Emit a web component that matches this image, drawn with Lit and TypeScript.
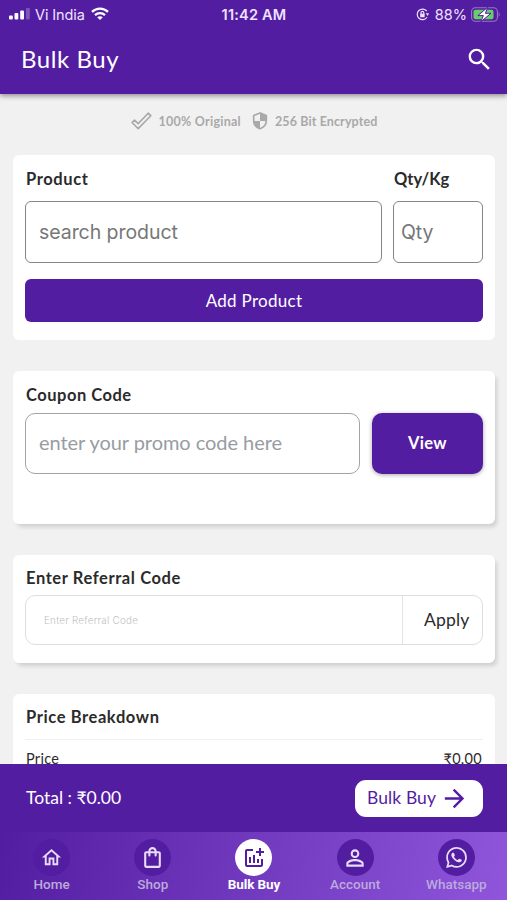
import { LitElement, html, css, svg } from "lit";
import { customElement } from "lit/decorators.js";

const icons = {
  search: "M15.5 14h-.79l-.28-.27A6.471 6.471 0 0 0 16 9.5 6.5 6.5 0 1 0 9.5 16c1.61 0 3.09-.59 4.23-1.57l.27.28v.79l5 4.99L20.49 19l-4.99-5zm-6 0C7.01 14 5 11.99 5 9.5S7.01 5 9.5 5 14 7.01 14 9.5 11.99 14 9.5 14z",
  home: "M12 5.69l5 4.5V18h-2v-6H9v6H7v-7.81l5-4.5M12 3L2 12h3v8h6v-6h2v6h6v-8h3L12 3z",
  shop: "M18 6h-2c0-2.21-1.79-4-4-4S8 3.79 8 6H6c-1.1 0-2 .9-2 2v12c0 1.1.9 2 2 2h12c1.1 0 2-.9 2-2V8c0-1.1-.9-2-2-2zm-6-2c1.1 0 2 .9 2 2h-4c0-1.1.9-2 2-2zm6 16H6V8h2v2c0 .55.45 1 1 1s1-.45 1-1V8h4v2c0 .55.45 1 1 1s1-.45 1-1V8h2v12z",
  chart: "M22 5v2h-3v3h-2V7h-3V5h3V2h2v3h3zm-3 14H5V5h6V3H5c-1.1 0-2 .9-2 2v14c0 1.1.9 2 2 2h14c1.1 0 2-.9 2-2v-6h-2v6zm-4-6v4h2v-4h-2zm-4 4h2V9h-2v8zm-2 0v-6H7v6h2z",
  person: "M12 5.9a2.1 2.1 0 1 1 0 4.2 2.1 2.1 0 0 1 0-4.2m0 9c2.97 0 6.1 1.46 6.1 2.1v1.1H5.9V17c0-.64 3.13-2.1 6.1-2.1M12 4C9.79 4 8 5.79 8 8s1.79 4 4 4 4-1.79 4-4-1.79-4-4-4zm0 9c-2.67 0-8 1.34-8 4v3h16v-3c0-2.66-5.33-4-8-4z",
  whatsapp: "M19.05 4.91A9.816 9.816 0 0 0 12.04 2c-5.46 0-9.91 4.45-9.91 9.91 0 1.75.46 3.45 1.32 4.95L2.05 22l5.25-1.38c1.45.79 3.08 1.21 4.74 1.21 5.46 0 9.91-4.45 9.91-9.91 0-2.65-1.03-5.14-2.9-7.01zm-7.01 15.24c-1.48 0-2.93-.4-4.2-1.15l-.3-.18-3.12.82.83-3.04-.2-.31a8.264 8.264 0 0 1-1.26-4.38c0-4.54 3.7-8.24 8.24-8.24 2.2 0 4.27.86 5.82 2.42a8.183 8.183 0 0 1 2.41 5.83c.02 4.54-3.68 8.23-8.22 8.23zm4.52-6.16c-.25-.12-1.47-.72-1.69-.81-.23-.08-.39-.12-.56.12-.17.25-.64.81-.78.97-.14.17-.29.19-.54.06-.25-.12-1.05-.39-1.99-1.23-.74-.66-1.23-1.47-1.38-1.72-.14-.25-.02-.38.11-.51.11-.11.25-.29.37-.43s.17-.25.25-.41c.08-.17.04-.31-.02-.43s-.56-1.34-.76-1.84c-.2-.48-.41-.42-.56-.43h-.48c-.17 0-.43.06-.66.31-.22.25-.86.85-.86 2.07s.89 2.4 1.01 2.56c.12.17 1.75 2.67 4.23 3.74.59.26 1.05.41 1.41.52.59.19 1.13.16 1.56.1.48-.07 1.47-.6 1.67-1.18.21-.58.21-1.07.14-1.18s-.22-.16-.47-.28z",
  arrow: "M12 4l-1.41 1.41L16.17 11H4v2h12.17l-5.58 5.59L12 20l8-8-8-8z",
};

const icon = (name: keyof typeof icons, size: number) =>
  html`<svg width=${size} height=${size} viewBox="0 0 24 24" fill="currentColor">${svg`<path d=${icons[name]}></path>`}</svg>`;

const tabs: { label: string; icon: keyof typeof icons; size: number; active?: boolean }[] = [
  { label: "Home", icon: "home", size: 23 },
  { label: "Shop", icon: "shop", size: 25 },
  { label: "Bulk Buy", icon: "chart", size: 24, active: true },
  { label: "Account", icon: "person", size: 26 },
  { label: "Whatsapp", icon: "whatsapp", size: 25 },
];

@customElement("app-root")
export class AppRoot extends LitElement {
  static styles = css`
    :host {
      display: flex;
      flex-direction: column;
      height: 900px;
      overflow: hidden;
      background: #f1f1f1;
      color: #2b2b2b;
      font-family: Lato, "Noto Sans", sans-serif;
      line-height: 1;
      white-space: nowrap;
    }
    * { box-sizing: border-box; }
    svg { display: block; flex: none; }
    .top {
      flex: none;
      height: 94px;
      background: #531da1;
      color: #fff;
      box-shadow: 0 2px 5px rgba(0, 0, 0, 0.4);
      z-index: 1;
    }
    .status {
      display: grid;
      grid-template-columns: 1fr auto 1fr;
      align-items: center;
      height: 28px;
      padding: 0 6px 0 9px;
      font: 14.5px Inter, sans-serif;
      color: #efe2ff;
    }
    .left, .right { display: flex; align-items: center; }
    .right { justify-content: flex-end; }
    .carrier { margin: 0 6px 0 5px; letter-spacing: -0.1px; }
    .clock { margin-right: 2px; font-weight: 600; letter-spacing: 0.2px; }
    .percent { margin: 0 4px 0 6px; }
    .appbar {
      display: flex;
      justify-content: space-between;
      align-items: center;
      height: 62px;
      padding: 0 13px 0 21px;
    }
    .title { font-size: 24px; letter-spacing: 0.55px; }
    .trust {
      display: flex;
      justify-content: center;
      align-items: center;
      height: 61px;
      padding: 0 0 7px 1px;
      color: #a9a9a9;
      font-size: 12.5px;
      font-weight: 700;
    }
    .original, .encrypted { line-height: 16px; padding-top: 1px; }
    .original { margin: 0 11px 0 7px; letter-spacing: 0.25px; }
    .encrypted { margin-left: 7px; letter-spacing: 0.12px; }
    .content { flex: 1; min-height: 0; overflow: hidden; }
    .card {
      margin: 0 12px 0 13px;
      padding: 0 12px;
      border-radius: 6px;
      background: #fff;
    }
    .raised { box-shadow: 3px 4px 4px -1px rgba(0, 0, 0, 0.14); }
    .products { height: 185px; margin-bottom: 31px; padding-top: 15px; }
    .coupon { height: 153px; margin-bottom: 31px; padding-top: 15px; }
    .referral { height: 108px; margin-bottom: 31px; padding-top: 14px; }
    .prices { height: 120px; padding-top: 14px; }
    .label { height: 18px; padding-left: 1px; line-height: 18px; font-size: 16.5px; font-weight: 700; letter-spacing: 0.6px; }
    .label.coupon-label { letter-spacing: 0.5px; }
    .label.short { letter-spacing: 0; }
    .row { display: flex; }
    .fields { display: grid; grid-template-columns: 357px 90px; gap: 11px; }
    .names { height: 31px; }
    .input {
      display: flex;
      align-items: center;
      height: 62px;
      padding-left: 13px;
      border: 1.5px solid #858585;
      border-radius: 6px;
      color: #777;
      font: 19.5px Inter, sans-serif;
      letter-spacing: -0.05px;
    }
    .qty { padding-left: 7px; }
    .add {
      display: flex;
      align-items: center;
      justify-content: center;
      height: 43px;
      margin-top: 16px;
      border-radius: 6px;
      background: #531da1;
      color: #fff;
      font-size: 17px;
      letter-spacing: 0.3px;
    }
    .promo {
      width: 335px;
      height: 61px;
      padding-bottom: 3px;
      border-color: #a3a3a3;
      border-radius: 10px;
      color: #979ca3;
      font: 20px Lato, sans-serif;
      letter-spacing: -0.05px;
    }
    .promo-row { margin-top: 9px; gap: 12px; }
    .view {
      display: flex;
      align-items: center;
      justify-content: center;
      width: 111px;
      height: 61px;
      border-radius: 10px;
      background: #531da1;
      color: #fff;
      font-size: 16.5px;
      font-weight: 700;
      letter-spacing: 0.3px;
      box-shadow: 0 1px 4px rgba(0, 0, 0, 0.35);
    }
    .refbox { height: 50px; margin-top: 8px; border: 1px solid #dedede; border-radius: 10px; align-items: stretch; }
    .hint { display: flex; align-items: center; flex: 1; padding-left: 18px; color: #c0c0c0; font: 300 9.8px Inter, sans-serif; letter-spacing: 0.27px; }
    .apply { display: flex; align-items: center; width: 80px; padding-left: 21px; border-left: 1px solid #e4e4e4; font-size: 17.5px; letter-spacing: 0.2px; }
    .price-row { justify-content: space-between; margin-top: 13px; padding: 12px 1px 0; border-top: 1px solid #f0f0f0; font-size: 14.5px; letter-spacing: 0.3px; }
    .checkout {
      flex: none;
      display: flex;
      align-items: center;
      justify-content: space-between;
      height: 68px;
      padding: 0 24px 0 26px;
      background: #531da1;
      color: #fff;
    }
    .total { font-size: 17.5px; }
    .buy {
      display: flex;
      align-items: center;
      width: 128px;
      height: 37px;
      padding-left: 12px;
      gap: 4px;
      border-radius: 11px;
      background: #fff;
      color: #531da1;
      font-size: 17.5px;
      letter-spacing: 0.1px;
    }
    .tabs {
      flex: none;
      display: grid;
      grid-template-columns: repeat(5, 101.2px);
      height: 68px;
      padding: 7px 0 0 1px;
      background: linear-gradient(100deg, #531da1 0%, #8f56dc 100%);
      color: #bda9dc;
      font: 500 13.5px Roboto, sans-serif;
    }
    .tab { display: flex; flex-direction: column; align-items: center; }
    .disc {
      display: flex;
      align-items: center;
      justify-content: center;
      width: 37px;
      height: 37px;
      border-radius: 50%;
      background: #531da1;
      color: #e9dcf8;
    }
    .active { color: #fff; font-weight: 700; letter-spacing: -0.1px; }
    .active .disc { background: #fff; color: #531da1; }
  `;

  render() {
    return html`
      <header class="top">
        <div class="status">
          <div class="left">
            <svg width="21" height="12" viewBox="0 0 21 12" fill="#fff">
              <rect x="0" y="7.5" width="3.8" height="4" rx="1"></rect>
              <rect x="5.5" y="5" width="3.8" height="6.5" rx="1"></rect>
              <rect x="11.2" y="2.5" width="3.8" height="9" rx="1"></rect>
              <rect x="17" y="0" width="3.8" height="11.5" rx="1" opacity=".25"></rect>
            </svg>
            <span class="carrier">Vi India</span>
            <svg width="18" height="14" viewBox="0 0 18 14" fill="none" stroke="#fff" stroke-width="2.3">
              <path d="M1 4.8C5.5.5 12.5.5 17 4.8M4 8.1c2.8-2.7 7.2-2.7 10 0"></path>
              <path d="M6.2 10.2c1.6-1.4 4-1.4 5.6 0L9 13.1z" fill="#fff" stroke="none"></path>
            </svg>
          </div>
          <span class="clock">11:42 AM</span>
          <div class="right">
            <svg width="13" height="13" viewBox="0 0 13 13" fill="none" stroke="#efe2ff" stroke-width="1.2">
              <path d="M10.8 3.2A5.3 5.3 0 1 0 11 9.2"></path>
              <path d="M9.7 5.3h3.3L11.7 7.9z" fill="#efe2ff" stroke="none"></path>
              <path d="M5 6V4.8a1.4 1.4 0 0 1 2.8 0V6"></path>
              <rect x="4.2" y="5.8" width="4.4" height="3.4" rx=".5" fill="#efe2ff" stroke="none"></rect>
            </svg>
            <span class="percent">88%</span>
            <svg width="30" height="15" viewBox="0 0 30 15">
              <rect x=".6" y=".8" width="25.8" height="13.4" rx="3.8" fill="none" stroke="#9678c9" stroke-width="1.1"></rect>
              <rect x="2.5" y="2.7" width="20" height="9.6" rx="2" fill="#65cf69"></rect>
              <path d="M27.7 5q2 2.5 0 5z" fill="#9678c9"></path>
              <path d="M16.8.2L6.8 8.6h5.6L9.8 14.800 20 6.300h-5.600z" fill="#fff" stroke="#531da1" stroke-width="1"></path>
            </svg>
          </div>
        </div>
        <div class="appbar"><span class="title">Bulk Buy</span>${icon("search", 29)}</div>
      </header>

      <main class="content">
        <div class="trust">
          <svg width="21" height="18" viewBox="0 0 21 18" fill="none" stroke="currentColor" stroke-width="1.6" stroke-linejoin="round">
            <path d="M1 10.5l2.5-2.4 3.7 3.5L17.2 1.2l2.6 2.5L7.2 16.6z"></path>
          </svg>
          <span class="original">100% Original</span>
          <svg width="16" height="18" viewBox="0 0 15 18">
            <path d="M7.5 1L1.2 3.5v5c0 3.7 2.7 7 6.3 8.2 3.6-1.2 6.3-4.5 6.3-8.2v-5z" fill="none" stroke="currentColor" stroke-width="1.7"></path>
            <path d="M7.5 1l6.3 2.5V9H7.5zM1.2 9h6.3v7.7C4 15.5 1.6 12.5 1.2 9z" fill="currentColor"></path>
          </svg>
          <span class="encrypted">256 Bit Encrypted</span>
        </div>

        <section class="card products">
          <div class="fields names"><span class="label">Product</span><span class="label short">Qty/Kg</span></div>
          <div class="fields"><div class="input">search product</div><div class="input qty">Qty</div></div>
          <div class="add">Add Product</div>
        </section>

        <section class="card raised coupon">
          <div class="label coupon-label">Coupon Code</div>
          <div class="row promo-row">
            <div class="input promo">enter your promo code here</div>
            <div class="view">View</div>
          </div>
        </section>

        <section class="card raised referral">
          <div class="label">Enter Referral Code</div>
          <div class="row refbox"><span class="hint">Enter Referral Code</span><span class="apply">Apply</span></div>
        </section>

        <section class="card prices">
          <div class="label">Price Breakdown</div>
          <div class="row price-row"><span>Price</span><span>₹0.00</span></div>
        </section>
      </main>

      <div class="checkout">
        <span class="total">Total : ₹0.00</span>
        <div class="buy"><span>Bulk Buy</span>${icon("arrow", 29)}</div>
      </div>
      <nav class="tabs">
        ${tabs.map(
          (t) => html`<div class="tab ${t.active ? "active" : ""}">
            <span class="disc">${icon(t.icon, t.size)}</span><span>${t.label}</span>
          </div>`,
        )}
      </nav>
    `;
  }
}
